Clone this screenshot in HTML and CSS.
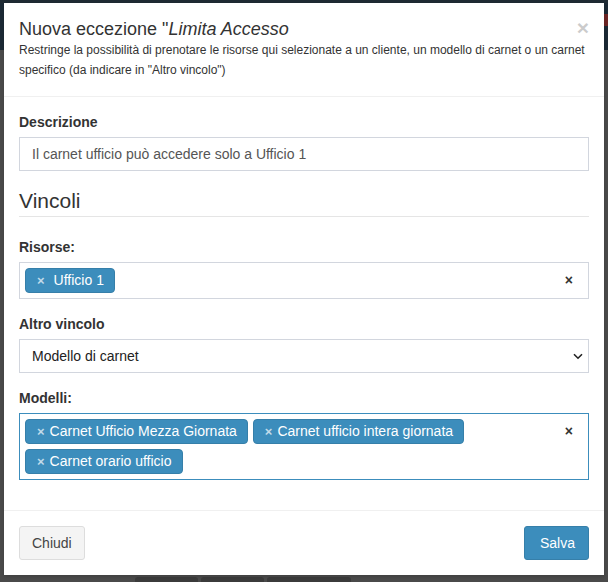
FILE: index.html
```html
<!DOCTYPE html>
<html lang="it">
<head>
    <meta charset="UTF-8">
    <meta name="viewport" content="width=device-width, initial-scale=1.0">
    <title>Nuova eccezione</title>
    <link rel="stylesheet" href="styles.css">
</head>
<body>
    <div class="page">
        <div class="navbar"><span class="navbar-mark"></span></div>
        <div class="page-fill"></div>
        <div class="page-tools">
            <span class="page-tool tool-a"></span>
            <span class="page-tool tool-b"></span>
            <span class="page-tool tool-c"></span>
        </div>
    </div>

    <div class="modal">
        <div class="modal-content">
            <div class="modal-header">
                <button type="button" class="close">&times;</button>
                <h4 class="modal-title">Nuova eccezione "<em>Limita Accesso</em></h4>
                <p class="modal-desc">Restringe la possibilità di prenotare le risorse qui selezionate a un cliente, un modello di carnet o un carnet specifico (da indicare in "Altro vincolo")</p>
            </div>

            <div class="modal-body">
                <div class="form-group">
                    <label for="descrizione">Descrizione</label>
                    <input type="text" id="descrizione" class="form-control" value="Il carnet ufficio può accedere solo a Ufficio 1">
                </div>

                <div class="legend">Vincoli</div>

                <div class="form-group">
                    <label>Risorse:</label>
                    <div class="tag-box">
                        <ul class="tags">
                            <li class="tag tag-spaced"><span class="tag-remove">&times;</span>Ufficio 1</li>
                        </ul>
                        <span class="tag-clear">&times;</span>
                    </div>
                </div>

                <div class="form-group">
                    <label>Altro vincolo</label>
                    <div class="form-control select-control">
                        <span>Modello di carnet</span>
                        <svg class="chevron" width="10" height="7" viewBox="0 0 10 7">
                            <path d="M1 1.2 L5 5.2 L9 1.2" fill="none" stroke="#222" stroke-width="1.6"/>
                        </svg>
                    </div>
                </div>

                <div class="form-group">
                    <label>Modelli:</label>
                    <div class="tag-box tag-box-focus">
                        <ul class="tags">
                            <li class="tag"><span class="tag-remove">&times;</span>Carnet Ufficio Mezza Giornata</li>
                            <li class="tag"><span class="tag-remove">&times;</span>Carnet ufficio intera giornata</li>
                            <li class="tag"><span class="tag-remove">&times;</span>Carnet orario ufficio</li>
                        </ul>
                        <span class="tag-clear">&times;</span>
                    </div>
                </div>
            </div>

            <div class="modal-footer">
                <button type="button" class="btn btn-default">Chiudi</button>
                <button type="button" class="btn btn-primary">Salva</button>
            </div>
        </div>
    </div>
</body>
</html>
```

FILE: styles.css
```css
body {
    font-family: "Liberation Sans", Arial, sans-serif;
    font-size: 14px;
    line-height: 20px;
    color: #333;
    background-color: #4a4a4a;
    margin: 0;
    padding: 0;
    overflow: hidden;
}
.page {
    height: 582px;
    display: flex;
    flex-direction: column;
    overflow: hidden;
}
.navbar {
    height: 50px;
    background-color: #1b2935;
    border-top: 3px solid #1e2a33;
    box-sizing: border-box;
    display: flex;
    justify-content: flex-end;
}
.navbar-mark {
    width: 30px;
    height: 12px;
    margin-top: 11px;
    background-color: #6b2424;
}
.page-fill {
    flex: 1;
}
.page-tools {
    display: flex;
    gap: 3px;
    padding-left: 135px;
    margin-bottom: -20px;
}
.page-tool {
    height: 25px;
    border-radius: 3px;
    background-color: #3b3b3b;
}
.tool-a { width: 63px; }
.tool-b { width: 63px; }
.tool-c { width: 84px; }

.modal {
    position: absolute;
    top: 3px;
    left: 4px;
    width: 600px;
}
.modal-content {
    background-color: #fff;
    box-shadow: 0 2px 3px rgba(0, 0, 0, 0.125);
}
.modal-header {
    padding: 15px 15px 16px;
    border-bottom: 1px solid #f0f0f0;
}
.close {
    float: right;
    padding: 0;
    margin-top: -1px;
    border: none;
    background: none;
    font-family: inherit;
    font-size: 21px;
    font-weight: bold;
    line-height: 1;
    color: #000;
    opacity: 0.2;
    cursor: pointer;
}
.modal-title {
    margin: 0;
    font-size: 18px;
    font-weight: normal;
    line-height: 22px;
    color: #333;
}
.modal-desc {
    margin: 0;
    font-size: 12px;
    line-height: 20px;
}
.modal-body {
    padding: 15px;
}
.form-group {
    margin-bottom: 15px;
}
.form-group label {
    display: block;
    margin-bottom: 5px;
    font-weight: bold;
}
.form-control {
    display: block;
    width: 100%;
    height: 34px;
    box-sizing: border-box;
    padding: 6px 12px;
    border: 1px solid #d2d6de;
    border-radius: 0;
    font-family: inherit;
    font-size: 14px;
    line-height: 20px;
    color: #555;
    background-color: #fff;
}
.select-control {
    display: flex;
    align-items: center;
    justify-content: space-between;
    color: #222;
    padding-right: 5px;
}
.chevron {
    display: block;
}
.legend {
    font-size: 21px;
    line-height: 30px;
    color: #333;
    border-bottom: 1px solid #e5e5e5;
    margin-bottom: 20px;
}
.tag-box {
    display: flex;
    align-items: flex-start;
    min-height: 34px;
    box-sizing: border-box;
    padding: 0 5px 5px;
    border: 1px solid #d2d6de;
}
.tag-box-focus {
    border-color: #3c8dbc;
}
.tags {
    flex: 1;
    display: flex;
    flex-wrap: wrap;
    list-style: none;
    margin: 0;
    padding: 0;
}
.tag {
    margin: 5px 5px 0 0;
    padding: 0 10px 0 11px;
    line-height: 22px;
    border: 1px solid #367fa9;
    border-radius: 4px;
    background-color: #3c8dbc;
    color: #fff;
    white-space: nowrap;
}
.tag-remove {
    font-size: 13px;
    font-weight: bold;
    color: rgba(255, 255, 255, 0.7);
    margin-right: 5px;
}
.tag-spaced .tag-remove {
    margin-right: 9px;
}
.tag-clear {
    margin: 5px 10px 0 10px;
    line-height: 24px;
    font-size: 14px;
    font-weight: bold;
    color: #333;
}
.modal-footer {
    display: flex;
    justify-content: space-between;
    padding: 15px;
    border-top: 1px solid #f0f0f0;
}
.btn {
    height: 34px;
    padding: 6px 12px;
    border: 1px solid transparent;
    border-radius: 3px;
    font-family: inherit;
    font-size: 14px;
    line-height: 20px;
    cursor: pointer;
}
.btn-default {
    background-color: #f4f4f4;
    border-color: #ddd;
    color: #444;
}
.btn-primary {
    background-color: #3c8dbc;
    border-color: #367fa9;
    color: #fff;
    padding: 6px 13px 6px 15px;
}
```
